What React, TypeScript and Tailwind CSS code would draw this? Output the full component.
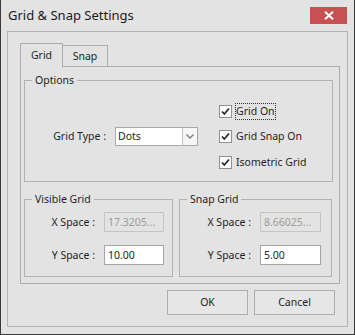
import React from "react";

function Check() {
  return (
    <span className="w-[13px] h-[13px] border border-[#8f8f8f] bg-[#fcfcfc] flex items-center justify-center shrink-0">
      <svg width="11" height="11" viewBox="0 0 11 11">
        <path d="M2 5.5 L4.3 8 L9 2.5" fill="none" stroke="#2b2b2b" strokeWidth="1.8" />
      </svg>
    </span>
  );
}

function CheckRow({ label, focused, className }: { label: string; focused?: boolean; className?: string }) {
  return (
    <div className={`flex items-center h-[17px] ${className ?? ""}`}>
      <Check />
      <span
        className={`ml-[3px] h-[17px] flex items-center border leading-none ${
          focused ? "border-dotted border-[#333]" : "border-transparent"
        }`}
      >
        {label}
      </span>
    </div>
  );
}

function Group({ title, className, children }: { title: string; className?: string; children?: React.ReactNode }) {
  return (
    <div className={`relative border border-[#b2b2b2] ${className ?? ""}`}>
      <span className="absolute left-[7px] -top-[9px] px-[3px] bg-[#e3e3e3] leading-[16px]">{title}</span>
      {children}
    </div>
  );
}

function Field({
  label,
  value,
  disabled,
  labelClass,
  inputClass,
  className,
}: {
  label: string;
  value: string;
  disabled?: boolean;
  labelClass: string;
  inputClass: string;
  className?: string;
}) {
  return (
    <div className={`flex items-center h-[20px] ${className ?? ""}`}>
      <span className={`${labelClass} text-right pr-[9px] leading-none`}>{label}</span>
      <div
        className={`${inputClass} h-[20px] border flex items-center pl-[3px] leading-none ${
          disabled ? "border-[#c4c4c4] text-[#9c9c9c] bg-[#e3e3e3]" : "bg-white border-[#a5a5a5]"
        }`}
      >
        {value}
      </div>
    </div>
  );
}

export default function App() {
  return (
    <div className="w-[355px] h-[335px] bg-[#e3e3e3] border-x border-b border-[#3a3a3a] flex flex-col text-[10.5px] text-[#1e1e1e] font-['Noto_Sans',sans-serif] select-none">
      {/* Title bar */}
      <div className="h-[31px] flex items-start justify-between pl-[7px] pr-[7px] shrink-0">
        <div className="mt-[6px] text-[13px] leading-[18px] text-[#1a1a1a]">Grid &amp; Snap Settings</div>
        <div className="mt-[7px] w-[37px] h-[17px] bg-[#c75050] flex items-center justify-center">
          <svg width="10" height="9" viewBox="0 0 10 9">
            <path d="M1 0.8 L9 8.2 M9 0.8 L1 8.2" stroke="#ffffff" strokeWidth="2" />
          </svg>
        </div>
      </div>

      {/* Main panel */}
      <div className="mx-[6px] h-[296px] border border-[#b4b4b4] flex flex-col pt-[11px] pl-[12px]">
        {/* Tabs */}
        <div className="flex items-end h-[23px]">
          <div className="relative z-10 w-[43px] h-[24px] -mb-[1px] bg-[#e3e3e3] border-t border-x border-[#acacac] flex items-center justify-center">
            Grid
          </div>
          <div className="-ml-[1px] w-[46px] h-[21px] bg-[#e3e3e3] border-t border-x border-[#acacac] flex items-center justify-center pt-[1px]">
            Snap
          </div>
        </div>

        {/* Tab panel */}
        <div className="w-[320px] h-[218px] border border-[#acacac] pl-[3px] pt-[13px] flex flex-col">
          <Group title="Options" className="w-[309px] h-[102px] flex items-start">
            <div className="flex items-center mt-[46px]">
              <span className="w-[90px] text-right pr-[9px] leading-none">Grid Type :</span>
              <div className="w-[83px] h-[19px] bg-white border border-[#a8a8a8] flex items-stretch">
                <span className="flex-1 flex items-center pl-[2px] leading-none">Dots</span>
                <span className="w-[15px] border-l border-[#c8c8c8] bg-[#f6f6f6] flex items-center justify-center">
                  <svg width="8" height="5" viewBox="0 0 8 5">
                    <path d="M0.5 0.5 L4 4 L7.5 0.5" fill="none" stroke="#7a7a7a" strokeWidth="1.3" />
                  </svg>
                </span>
              </div>
            </div>
            <div className="ml-[21px] mt-[22px] flex flex-col">
              <CheckRow label="Grid On" focused />
              <CheckRow label="Grid Snap On" className="mt-[8px]" />
              <CheckRow label="Isometric Grid" className="mt-[9px]" />
            </div>
          </Group>

          <div className="flex mt-[17px] gap-[6px]">
            <Group title="Visible Grid" className="w-[149px] h-[78px] pt-[12px]">
              <Field label="X Space :" value="17.3205..." disabled labelClass="w-[79px]" inputClass="w-[60px]" />
              <Field label="Y Space :" value="10.00" labelClass="w-[79px]" inputClass="w-[60px]" className="mt-[13px]" />
            </Group>
            <Group title="Snap Grid" className="w-[153px] h-[78px] pt-[12px]">
              <Field label="X Space :" value="8.66025..." disabled labelClass="w-[80px]" inputClass="w-[61px]" />
              <Field label="Y Space :" value="5.00" labelClass="w-[80px]" inputClass="w-[61px]" className="mt-[13px]" />
            </Group>
          </div>
        </div>

        {/* Buttons */}
        <div className="flex justify-end gap-[6px] mt-[6px] pr-[12px]">
          <div className="w-[81px] h-[25px] bg-[#e6e6e6] border border-[#adadad] flex items-center justify-center leading-none">
            OK
          </div>
          <div className="w-[81px] h-[25px] bg-[#e6e6e6] border border-[#adadad] flex items-center justify-center leading-none">
            Cancel
          </div>
        </div>
      </div>
    </div>
  );
}
